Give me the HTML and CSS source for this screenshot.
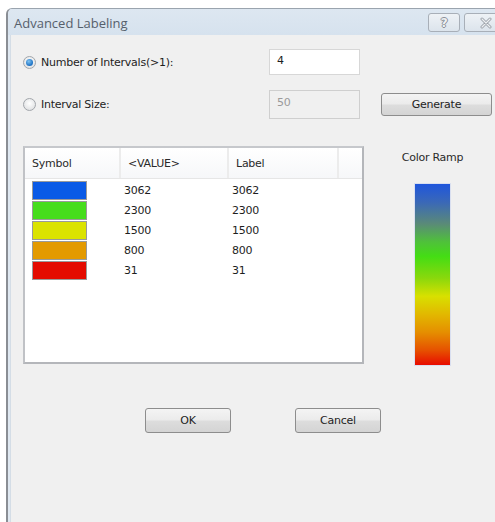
FILE: index.html
```html
<!DOCTYPE html>
<html>
<head>
<meta charset="utf-8">
<link rel="stylesheet" href="styles.css">
</head>
<body>
<div class="window">
  <div class="titlebar">
    <span class="title">Advanced Labeling</span>
    <div class="caption-buttons">
      <span class="cap-btn help">?</span>
      <span class="cap-btn close">
        <svg width="14" height="12" viewBox="0 0 14 12"><path d="M3 2 L11 10 M11 2 L3 10" stroke="#9aa0a8" stroke-width="3" stroke-linecap="round" fill="none"/><path d="M3 2 L11 10 M11 2 L3 10" stroke="#eef0f2" stroke-width="1.2" stroke-linecap="round" fill="none"/></svg>
      </span>
    </div>
  </div>
  <div class="client">
    <div class="options">
      <label class="radio-row"><span class="radio checked"></span>Number of Intervals(&gt;1):</label>
      <div class="field">4</div>
      <div></div>
      <label class="radio-row"><span class="radio"></span>Interval Size:</label>
      <div class="field disabled">50</div>
      <button class="btn generate">Generate</button>
    </div>
    <div class="middle">
      <div class="listview">
        <div class="lv-head">
          <span class="col c1">Symbol</span>
          <span class="col c2">&lt;VALUE&gt;</span>
          <span class="col c3">Label</span>
          <span class="col c4"></span>
        </div>
        <div class="lv-row"><span class="swatch" style="background:#0a5ae6"></span><span class="c2">3062</span><span class="c3">3062</span></div>
        <div class="lv-row"><span class="swatch" style="background:#46dd1c"></span><span class="c2">2300</span><span class="c3">2300</span></div>
        <div class="lv-row"><span class="swatch" style="background:#dbe300"></span><span class="c2">1500</span><span class="c3">1500</span></div>
        <div class="lv-row"><span class="swatch" style="background:#e39a00"></span><span class="c2">800</span><span class="c3">800</span></div>
        <div class="lv-row"><span class="swatch" style="background:#e40b00"></span><span class="c2">31</span><span class="c3">31</span></div>
      </div>
      <div class="ramp-box">
        <div class="ramp-label">Color Ramp</div>
        <div class="ramp"></div>
      </div>
    </div>
    <div class="actions">
      <button class="btn ok">OK</button>
      <button class="btn cancel">Cancel</button>
    </div>
  </div>
</div>
</body>
</html>
```
FILE: styles.css
```css
html, body {
  margin: 0;
  padding: 0;
  overflow: hidden;
  background: #ffffff;
}

body {
  width: 495px;
  height: 522px;
  font-family: "DejaVu Sans", sans-serif;
  font-size: 11px;
  letter-spacing: -0.25px;
  color: #1e1e1e;
}

.window {
  margin: 8px 0 0 6px;
  width: 501px;
  height: 540px;
  border-left: 2px solid #8a8e94;
  border-top: 1px solid #9aa4ae;
  border-radius: 6px 0 0 0;
  background: #dfe8f1;
  padding-left: 2px;
  box-sizing: border-box;
  overflow: hidden;
}

.titlebar {
  height: 26px;
  display: flex;
  align-items: center;
  justify-content: space-between;
  background: linear-gradient(#dde7f1, #d6e2ee);
  margin-left: -2px;
  padding-left: 6px;
}

.title {
  font-family: "Open Sans", sans-serif;
  font-size: 13px;
  letter-spacing: 0;
  color: #56606c;
  margin-top: 1px;
}

.caption-buttons {
  display: flex;
  gap: 4px;
  align-self: flex-start;
  margin-top: 4px;
}

.cap-btn {
  height: 17px;
  border: 1px solid #a8afb8;
  border-radius: 3px;
  background: linear-gradient(#eef2f6, #dce4ec);
  display: flex;
  align-items: center;
  justify-content: center;
}

.help {
  width: 30px;
  font-family: "DejaVu Sans", sans-serif;
  font-weight: bold;
  font-size: 12px;
  color: #eef0f2;
  text-shadow: 1px 0 0 #8a9098, -1px 0 0 #8a9098, 0 1px 0 #8a9098, 0 -1px 0 #8a9098;
}

.close {
  width: 41px;
}

.client {
  background: #f0f0f0;
  height: 520px;
  padding: 14px 0 0 12px;
  box-sizing: border-box;
  border-left: 1px solid #d4dde6;
}

.options {
  display: grid;
  grid-template-columns: 246px 91px 111px;
  grid-template-rows: 26px 29px;
  column-gap: 0;
  row-gap: 15px;
  align-items: center;
}

.options .generate {
  margin-left: 21px;
  width: 111px;
}

.radio-row {
  display: flex;
  align-items: center;
  gap: 5px;
  color: #1e1e1e;
}

.radio {
  width: 11px;
  height: 11px;
  border-radius: 50%;
  border: 1px solid #a2a6ab;
  background: radial-gradient(circle at 50% 40%, #ffffff, #d8dadc);
  display: inline-flex;
  align-items: center;
  justify-content: center;
}

.radio.checked::after {
  content: "";
  width: 7px;
  height: 7px;
  border-radius: 50%;
  background: radial-gradient(circle at 40% 35%, #7fc4f3, #1b6fc2 70%);
}

.field {
  height: 26px;
  box-sizing: border-box;
  border: 1px solid #d7d7d7;
  background: #ffffff;
  padding: 4px 0 0 7px;
  color: #1e1e1e;
}

.field.disabled {
  height: 29px;
  background: #f0f0f0;
  border-color: #cfcfcf;
  color: #9a9a9a;
  padding-top: 5px;
}

.btn {
  font-family: "DejaVu Sans", sans-serif;
  font-size: 11px;
  letter-spacing: -0.25px;
  color: #1e1e1e;
  height: 23px;
  border: 1px solid #8d8d8d;
  border-radius: 3px;
  background: linear-gradient(#f4f4f4 0%, #ebebeb 48%, #dddddd 52%, #d4d4d4 100%);
  padding: 0;
}

.middle {
  display: flex;
  margin-top: 27px;
}

.listview {
  width: 341px;
  height: 218px;
  box-sizing: border-box;
  border: 2px solid #b4b6ba;
  border-top-color: #c6c8cc;
  border-left-color: #c0c2c6;
  background: #ffffff;
}

.lv-head {
  display: flex;
  height: 30px;
  border-bottom: 1px solid #e6e6e6;
  background: linear-gradient(#ffffff, #f6f7f9);
}

.lv-head .col {
  box-sizing: border-box;
  border-right: 2px solid #ececec;
  padding: 9px 0 0 7px;
  color: #2a2a2a;
}

.lv-head .c1 { width: 96px; }
.lv-head .c2 { width: 108px; }
.lv-head .c3 { width: 110px; }
.lv-head .c4 { flex: 1; border-right: none; }

.lv-row {
  display: flex;
  align-items: center;
  height: 20px;
}

.lv-row .swatch {
  width: 55px;
  height: 19px;
  box-sizing: border-box;
  border: 1px solid #9a9a9a;
  margin: 0 37px 0 7px;
}

.lv-row .c2 { width: 108px; }
.lv-row .c3 { width: 110px; }

.lv-row:nth-child(2) { margin-top: 1px; }

.ramp-box {
  display: flex;
  flex-direction: column;
  align-items: center;
  width: 137px;
}

.ramp-label {
  margin-top: 5px;
  color: #2a2a2a;
}

.ramp {
  margin-top: 19px;
  width: 37px;
  height: 183px;
  box-sizing: border-box;
  border: 1px solid #d9dff0;
  background: linear-gradient(#1f56dc 0%, #3a68b8 10%, #5a8a78 22%, #4fc13a 32%, #44dd14 40%, #8ad80c 52%, #d8e000 62%, #e2b800 72%, #e58e00 82%, #e65000 92%, #e80c00 100%);
}

.actions {
  display: flex;
  margin-top: 42px;
  padding-left: 122px;
  gap: 64px;
}

.actions .btn {
  width: 86px;
  height: 25px;
}
```
